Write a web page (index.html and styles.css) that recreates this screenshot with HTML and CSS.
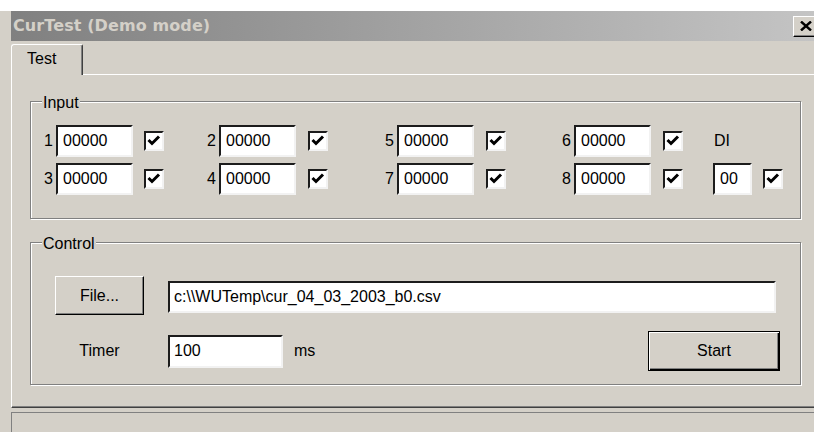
FILE: index.html
```html
<!DOCTYPE html>
<html>
<head>
<meta charset="utf-8">
<title>CurTest</title>
<link rel="stylesheet" href="styles.css">
</head>
<body>
<div class="desk">
  <div class="window">
    <div class="titlebar">
      <span class="title">CurTest (Demo mode)</span>
      <div class="close">
        <svg width="12" height="10" viewBox="0 0 12 10"><path d="M1 0.5 L11 9.5 M11 0.5 L1 9.5" stroke="#000" stroke-width="2.4" fill="none"/></svg>
      </div>
    </div>
    <div class="client">
      <div class="tabstrip">
        <div class="tab">Test</div>
      </div>
      <div class="panel">
        <div class="group group-input">
          <span class="group-label">Input</span>
          <div class="io-grid">
            <span class="num">1</span><div class="field">00000</div><span class="chk-cell"><span class="check"><svg width="16" height="16" viewBox="0 0 16 16"><path d="M2.5 7 L6 10.5 L13 3.5" stroke="#000" stroke-width="3" fill="none"/></svg></span></span>
            <span class="num">2</span><div class="field">00000</div><span class="chk-cell"><span class="check"><svg width="16" height="16" viewBox="0 0 16 16"><path d="M2.5 7 L6 10.5 L13 3.5" stroke="#000" stroke-width="3" fill="none"/></svg></span></span>
            <span class="num">5</span><div class="field">00000</div><span class="chk-cell"><span class="check"><svg width="16" height="16" viewBox="0 0 16 16"><path d="M2.5 7 L6 10.5 L13 3.5" stroke="#000" stroke-width="3" fill="none"/></svg></span></span>
            <span class="num">6</span><div class="field">00000</div><span class="chk-cell"><span class="check"><svg width="16" height="16" viewBox="0 0 16 16"><path d="M2.5 7 L6 10.5 L13 3.5" stroke="#000" stroke-width="3" fill="none"/></svg></span></span>
            <span class="num"></span><span class="di-label">DI</span><span class="chk-cell"></span>

            <span class="num">3</span><div class="field">00000</div><span class="chk-cell"><span class="check"><svg width="16" height="16" viewBox="0 0 16 16"><path d="M2.5 7 L6 10.5 L13 3.5" stroke="#000" stroke-width="3" fill="none"/></svg></span></span>
            <span class="num">4</span><div class="field">00000</div><span class="chk-cell"><span class="check"><svg width="16" height="16" viewBox="0 0 16 16"><path d="M2.5 7 L6 10.5 L13 3.5" stroke="#000" stroke-width="3" fill="none"/></svg></span></span>
            <span class="num">7</span><div class="field">00000</div><span class="chk-cell"><span class="check"><svg width="16" height="16" viewBox="0 0 16 16"><path d="M2.5 7 L6 10.5 L13 3.5" stroke="#000" stroke-width="3" fill="none"/></svg></span></span>
            <span class="num">8</span><div class="field">00000</div><span class="chk-cell"><span class="check"><svg width="16" height="16" viewBox="0 0 16 16"><path d="M2.5 7 L6 10.5 L13 3.5" stroke="#000" stroke-width="3" fill="none"/></svg></span></span>
            <span class="num"></span><div class="field">00</div><span class="chk-cell"><span class="check"><svg width="16" height="16" viewBox="0 0 16 16"><path d="M2.5 7 L6 10.5 L13 3.5" stroke="#000" stroke-width="3" fill="none"/></svg></span></span>
          </div>
        </div>

        <div class="group group-control">
          <span class="group-label">Control</span>
          <div class="control-grid">
            <div class="btn btn-file">File...</div>
            <div class="field field-path">c:\\WUTemp\cur_04_03_2003_b0.csv</div>
            <span class="timer-label">Timer</span>
            <div class="timer-row">
              <div class="field field-timer">100</div>
              <span class="unit">ms</span>
              <div class="btn btn-default">Start</div>
            </div>
          </div>
        </div>
      </div>
      <div class="statusbar"></div>
    </div>
  </div>
</div>
</body>
</html>
```

FILE: styles.css
```css
* {
  box-sizing: border-box;
}

html,
body {
  margin: 0;
  padding: 0;
}

body {
  width: 814px;
  height: 432px;
  overflow: hidden;
  background: #fff;
  color: #000;
  font-family: "Liberation Sans", Arial, sans-serif;
  font-size: 16px;
  line-height: 22px;
}

.desk {
  padding-top: 11px;
  height: 432px;
}

.window {
  height: 421px;
  background: #d4d0c8;
  overflow: hidden;
  display: flex;
  flex-direction: column;
}

/* caption bar (inactive) */
.titlebar {
  flex: none;
  height: 30px;
  margin-left: 11px;
  background: linear-gradient(to right, #808080, #c4c4c4);
  display: flex;
  align-items: center;
  justify-content: space-between;
}

.title {
  padding-left: 2px;
  font-family: "DejaVu Sans", sans-serif;
  font-weight: bold;
  font-size: 16px;
  letter-spacing: 0.1px;
  color: #d4d0c8;
  white-space: nowrap;
}

.close {
  width: 23px;
  height: 21px;
  margin-right: -2px;
  padding-left: 6px;
  background: #d4d0c8;
  border: 1px solid;
  border-color: #fff #000 #000 #fff;
  box-shadow: inset -1px -1px 0 #808080;
  display: flex;
  align-items: center;
}

.close svg {
  display: block;
}

.client {
  flex: 1;
  padding-left: 11px;
  display: flex;
  flex-direction: column;
}

/* tab header */
.tabstrip {
  flex: none;
  height: 33px;
  padding-top: 3px;
  display: flex;
}

.tab {
  position: relative;
  z-index: 1;
  width: 72px;
  height: 31px;
  margin-bottom: -1px;
  padding: 3px 0 0 15px;
  background: #d4d0c8;
  border-top: 1px solid #fff;
  border-left: 1px solid #fff;
  border-right: 1px solid #404040;
  border-top-left-radius: 3px;
  border-top-right-radius: 2px;
  box-shadow: inset -1px 0 0 #808080;
}

/* tab page */
.panel {
  flex: none;
  height: 334px;
  padding: 26px 0 0 18px;
  border-top: 1px solid #fff;
  border-left: 1px solid #fff;
  border-bottom: 1px solid #404040;
  box-shadow: inset 0 -1px 0 #808080;
}

/* etched group box */
.group {
  position: relative;
  width: 771px;
  border: 1px solid #808080;
  box-shadow: 1px 1px 0 #fff, inset 1px 1px 0 #fff;
}

.group-label {
  position: absolute;
  left: 11px;
  top: -9px;
  padding: 0 1px;
  background: #d4d0c8;
  line-height: 20px;
}

.group-input {
  padding: 23px 0;
}

.io-grid {
  display: grid;
  grid-template-columns: 25px 77px 31px 55px 77px 32px 69px 77px 32px 68px 77px 32px 30px 39px 31px;
  grid-template-rows: 32px 32px;
  row-gap: 6px;
  align-items: center;
}

.num {
  text-align: right;
  padding-right: 3px;
}

.di-label {
  padding-left: 1px;
}

.chk-cell {
  display: flex;
  justify-content: flex-end;
}

/* sunken edit box */
.field {
  height: 32px;
  padding-left: 5px;
  background: #fff;
  border: 2px solid;
  border-color: #1c1c1c #f2f2f2 #f2f2f2 #1c1c1c;
  line-height: 28px;
  white-space: nowrap;
  overflow: hidden;
}

.check {
  width: 20px;
  height: 20px;
  background: #fff;
  border: 2px solid;
  border-color: #1c1c1c #f2f2f2 #f2f2f2 #1c1c1c;
}

.check svg {
  display: block;
}

.group-control {
  margin-top: 23px;
  padding: 33px 24px 13px 24px;
}

.control-grid {
  display: grid;
  grid-template-columns: 89px 1fr;
  grid-template-rows: 39px 40px;
  column-gap: 24px;
  row-gap: 16px;
  align-items: center;
}

/* raised push button */
.btn {
  display: flex;
  align-items: center;
  justify-content: center;
  background: #d4d0c8;
  border: 1px solid;
  border-color: #fff #000 #000 #fff;
  box-shadow: inset -1px -1px 0 #808080;
}

.btn-file {
  height: 39px;
}

.field-path {
  align-self: start;
  margin-top: 5px;
  padding-left: 4px;
}

.timer-label {
  text-align: center;
}

.timer-row {
  display: flex;
  align-items: center;
}

.field-timer {
  width: 115px;
  height: 33px;
  padding-left: 4px;
}

.unit {
  margin-left: 11px;
}

.btn-default {
  width: 132px;
  height: 40px;
  margin-left: auto;
  margin-right: -4px;
  border-color: #000;
  box-shadow: inset 1px 1px 0 #fff, inset -1px -1px 0 #000, inset -2px -2px 0 #808080;
}

.statusbar {
  flex: 1;
  margin-top: 4px;
  border-top: 1px solid #808080;
  border-left: 1px solid #808080;
}
```
